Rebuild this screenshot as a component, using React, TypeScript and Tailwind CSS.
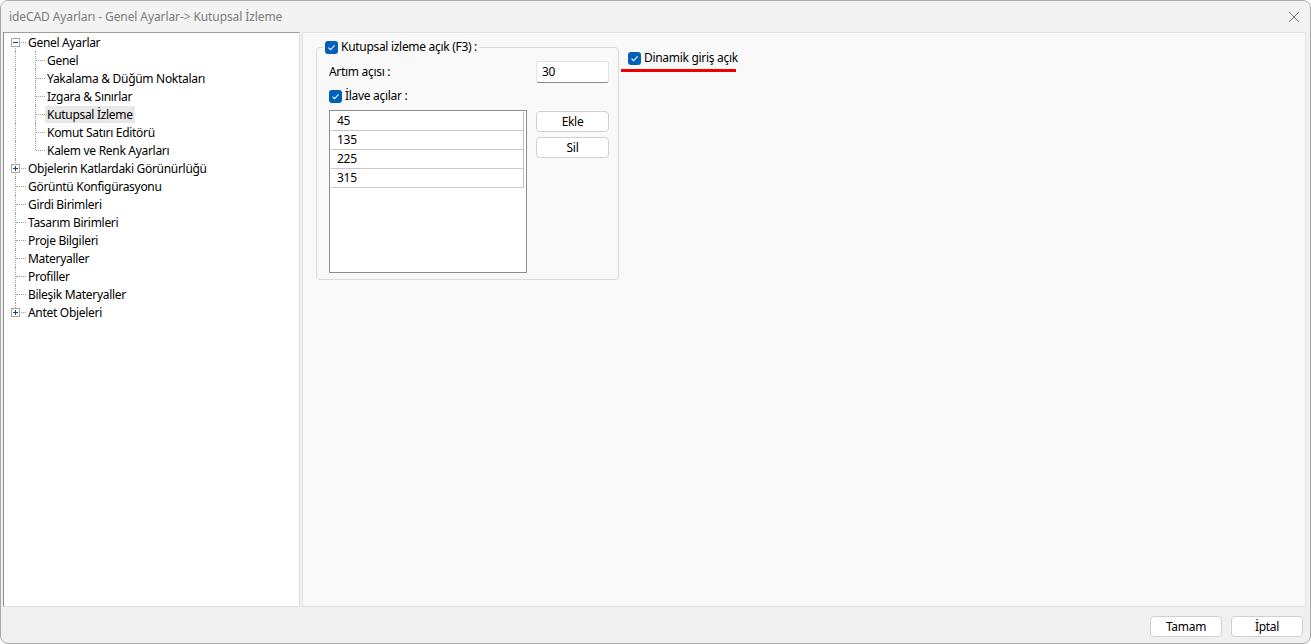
import React from 'react';

type TreeItem = {
  label: string;
  level: 0 | 1;
  expander?: 'plus' | 'minus';
  last?: boolean;
  selected?: boolean;
};

const treeItems: TreeItem[] = [
  { label: 'Genel Ayarlar', level: 0, expander: 'minus' },
  { label: 'Genel', level: 1 },
  { label: 'Yakalama & Düğüm Noktaları', level: 1 },
  { label: 'Izgara & Sınırlar', level: 1 },
  { label: 'Kutupsal İzleme', level: 1, selected: true },
  { label: 'Komut Satırı Editörü', level: 1 },
  { label: 'Kalem ve Renk Ayarları', level: 1, last: true },
  { label: 'Objelerin Katlardaki Görünürlüğü', level: 0, expander: 'plus' },
  { label: 'Görüntü Konfigürasyonu', level: 0 },
  { label: 'Girdi Birimleri', level: 0 },
  { label: 'Tasarım Birimleri', level: 0 },
  { label: 'Proje Bilgileri', level: 0 },
  { label: 'Materyaller', level: 0 },
  { label: 'Profiller', level: 0 },
  { label: 'Bileşik Materyaller', level: 0 },
  { label: 'Antet Objeleri', level: 0, expander: 'plus', last: true },
];

const angles = ['45', '135', '225', '315'];

function Expander({ kind }: { kind: 'plus' | 'minus' }) {
  return (
    <svg width="9" height="9" viewBox="0 0 9 9" className="absolute left-[7px] top-[5px] z-10">
      <rect x="0.5" y="0.5" width="8" height="8" fill="#ffffff" stroke="#a7a7a7" />
      <path d="M2 4.5h5" stroke="#1f3c88" strokeWidth="1" />
      {kind === 'plus' && <path d="M4.5 2v5" stroke="#1f3c88" strokeWidth="1" />}
    </svg>
  );
}

function CheckBox() {
  return (
    <span className="flex w-[13px] h-[13px] items-center justify-center rounded-[3px] bg-[#005fb8] shrink-0">
      <svg width="9" height="9" viewBox="0 0 9 9">
        <path d="M1.5 4.6 3.6 6.6 7.6 2.4" fill="none" stroke="#ffffff" strokeWidth="1.1" />
      </svg>
    </span>
  );
}

function TreeRow({ item, index }: { item: TreeItem; index: number }) {
  const first = index === 0;
  const lastTop = item.level === 0 && item.last;
  return (
    <div className="relative flex h-[18px] items-center">
      {/* level 0 vertical line */}
      {item.level === 0 ? (
        <span
          className={`absolute left-[11px] border-l border-dotted border-[#a0a0a0] ${
            first ? 'top-[9px] bottom-0' : lastTop ? 'top-0 h-[9px]' : 'top-0 bottom-0'
          }`}
        />
      ) : (
        <span className="absolute left-[11px] top-0 bottom-0 border-l border-dotted border-[#a0a0a0]" />
      )}
      {item.level === 0 && (
        <span className="absolute left-[12px] top-[9px] w-[10px] border-t border-dotted border-[#a0a0a0]" />
      )}
      {item.level === 1 && (
        <>
          <span
            className={`absolute left-[31px] border-l border-dotted border-[#a0a0a0] ${
              item.last ? 'top-0 h-[9px]' : 'top-0 bottom-0'
            }`}
          />
          <span className="absolute left-[32px] top-[9px] w-[9px] border-t border-dotted border-[#a0a0a0]" />
        </>
      )}
      {item.expander && <Expander kind={item.expander} />}
      <span
        className={`${item.level === 0 ? 'ml-[22px]' : 'ml-[41px]'} px-[2px] leading-[17px] ${
          item.selected ? 'bg-[#e8e8e8]' : ''
        }`}
      >
        {item.label}
      </span>
    </div>
  );
}

export default function App() {
  return (
    <div
      className="w-[1311px] h-[644px] flex flex-col bg-[#f0f0f0] border border-[#a9a9a9] rounded-[8px] overflow-hidden text-[12px] tracking-[-0.3px] text-black"
      style={{ fontFamily: '"Noto Sans", "Open Sans", sans-serif' }}
    >
      {/* Title bar */}
      <div className="h-[31px] flex items-center justify-between pl-[8px] pr-[8px] bg-[#f3f3f3] shrink-0">
        <span className="text-[12px] tracking-[-0.1px] text-[#7b7b7b]">ideCAD Ayarları - Genel Ayarlar-&gt; Kutupsal İzleme</span>
        <svg width="12" height="12" viewBox="0 0 12 12" className="mr-[2px]">
          <path d="M1 1l10 10M11 1 1 11" stroke="#6e6e6e" strokeWidth="1" />
        </svg>
      </div>

      {/* Body */}
      <div className="flex h-[575px] px-[2px] gap-[2px] shrink-0">
        {/* Tree */}
        <div className="w-[297px] bg-white border border-l-[#8f8f8f] border-t-[#a0a0a0] border-r-[#e0e0e0] border-b-[#e0e0e0]">
          {treeItems.map((item, i) => (
            <TreeRow key={item.label} item={item} index={i} />
          ))}
        </div>

        {/* Settings panel */}
        <div className="flex-1 bg-[#f9f9f9] border border-[#e2e2e2] flex items-start pl-[13px] mr-[2px]">
          <fieldset className="w-[303px] h-[242px] mt-[5px] border border-[#dcdcdc] rounded-[4px] pl-[12px] pr-[9px] pb-[6px]">
            <legend className="flex items-center gap-[3px] px-[2px] ml-[-6px]">
              <CheckBox />
              <span>Kutupsal izleme açık (F3) :</span>
            </legend>
            <div className="flex items-center justify-between mt-[5px]">
              <span>Artım açısı :</span>
              <div className="w-[73px] h-[22px] bg-white border border-[#e5e5e5] border-b-[#8a8a8a] rounded-[3px] flex items-center px-[5px]">
                30
              </div>
            </div>
            <div className="flex items-center gap-[3px] mt-[4px]">
              <CheckBox />
              <span>İlave açılar :</span>
            </div>
            <div className="flex items-start gap-[9px] mt-[5px]">
              <div className="w-[198px] h-[163px] bg-white border border-[#8c8c8c] pt-[1px] pl-[1px]">
                <div className="w-[193px] border-r border-[#bdbdbd]">
                  {angles.map((a) => (
                    <div key={a} className="h-[19px] border-b border-[#c9c9c9] flex items-center pl-[6px] leading-none">
                      {a}
                    </div>
                  ))}
                </div>
              </div>
              <div className="flex flex-col gap-[5px] pt-[1px]">
                <button className="w-[73px] h-[21px] bg-white border border-[#d0d0d0] rounded-[4px] leading-none">
                  Ekle
                </button>
                <button className="w-[73px] h-[21px] bg-white border border-[#d0d0d0] rounded-[4px] leading-none">
                  Sil
                </button>
              </div>
            </div>
          </fieldset>

          <div className="ml-[2px] mt-[16px] flex flex-col">
            <div className="flex items-center gap-[3px] pl-[7px]">
              <CheckBox />
              <span>Dinamik giriş açık</span>
            </div>
            <div className="w-[115px] h-[3px] bg-[#ee0000] mt-[2px]" />
          </div>
        </div>
      </div>

      {/* Footer */}
      <div className="flex-1 flex justify-end items-start gap-[9px] pt-[9px] pr-[7px]">
        <button className="w-[72px] h-[21px] bg-white border border-[#d0d0d0] rounded-[4px] leading-none">
          Tamam
        </button>
        <button className="w-[72px] h-[21px] bg-white border border-[#d0d0d0] rounded-[4px] leading-none">
          İptal
        </button>
      </div>
    </div>
  );
}
